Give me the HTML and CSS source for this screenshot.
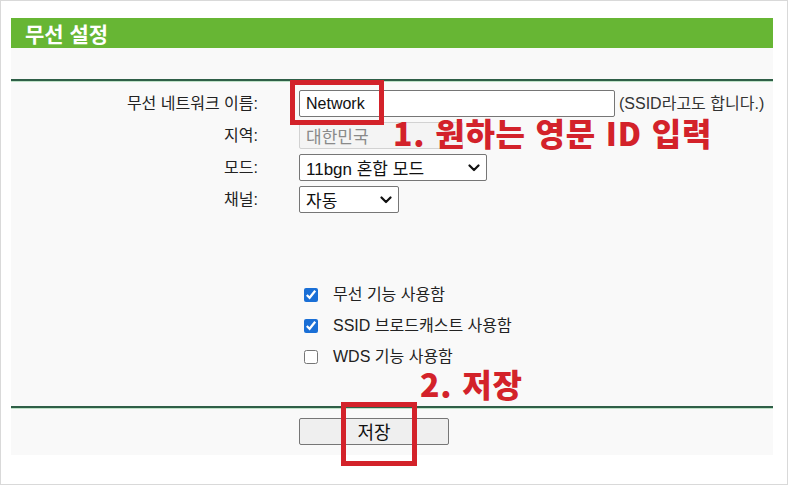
FILE: index.html
```html
<!DOCTYPE html>
<html lang="ko">
<head>
<meta charset="utf-8">
<title>무선 설정</title>
<link rel="stylesheet" href="styles.css">
</head>
<body>
<div class="page">
  <div class="panel">
    <div class="header">무선 설정</div>
    <div class="rule rule-top"></div>
    <div class="form">
      <div class="label">무선 네트워크 이름:</div>
      <div class="field">
        <input class="text-input ssid" type="text" value="Network">
        <span class="hint">(SSID라고도 합니다.)</span>
      </div>

      <div class="label">지역:</div>
      <div class="field">
        <input class="text-input region" type="text" value="대한민국" disabled>
      </div>

      <div class="label">모드:</div>
      <div class="field">
        <div class="select mode">
          <span>11bgn 혼합 모드</span>
          <svg class="chev" width="12" height="8" viewBox="0 0 12 8"><path d="M1.5 1.5 L6 6 L10.5 1.5" fill="none" stroke="#111" stroke-width="2.2" stroke-linecap="round" stroke-linejoin="round"/></svg>
        </div>
      </div>

      <div class="label">채널:</div>
      <div class="field">
        <div class="select channel">
          <span>자동</span>
          <svg class="chev" width="12" height="8" viewBox="0 0 12 8"><path d="M1.5 1.5 L6 6 L10.5 1.5" fill="none" stroke="#111" stroke-width="2.2" stroke-linecap="round" stroke-linejoin="round"/></svg>
        </div>
      </div>
    </div>

    <div class="checks">
      <label class="check-row"><input type="checkbox" checked><span>무선 기능 사용함</span></label>
      <label class="check-row"><input type="checkbox" checked><span>SSID 브로드캐스트 사용함</span></label>
      <label class="check-row"><input type="checkbox"><span>WDS 기능 사용함</span></label>
    </div>

    <div class="rule rule-bottom"></div>
    <div class="actions">
      <button class="save-btn" type="button">저장</button>
    </div>
  </div>

  <div class="mark box-name"></div>
  <div class="note note-1">1. 원하는 영문 ID 입력</div>
  <div class="note note-2">2. 저장</div>
  <div class="mark box-save"></div>
</div>
</body>
</html>
```

FILE: styles.css
```css
html, body {
  margin: 0;
  padding: 0;
  background: #ffffff;
}

body {
  font-family: "Liberation Sans", "Noto Sans CJK KR", sans-serif;
  color: #222;
}

.page {
  position: relative;
  width: 788px;
  height: 485px;
  box-sizing: border-box;
  border: 1px solid #d9d9d9;
  padding: 17px 0 0 10px;
  background: #ffffff;
}

.panel {
  width: 762px;
  height: 437px;
  background: #f9f9f9;
  display: flex;
  flex-direction: column;
}

.header {
  height: 30px;
  line-height: 30px;
  background: #67b634;
  color: #ffffff;
  font-size: 21px;
  font-weight: bold;
  padding-left: 14px;
  font-family: "Noto Sans CJK KR", sans-serif;
}

.rule {
  height: 2px;
  background: #2f5f47;
  border-bottom: 1px solid #bfe2c8;
}

.rule-top {
  margin-top: 31px;
}

.form {
  display: grid;
  grid-template-columns: 247px auto;
  grid-auto-rows: 27px;
  column-gap: 41px;
  row-gap: 5px;
  padding-top: 8px;
}

.label {
  text-align: right;
  font-size: 16px;
  line-height: 27px;
  color: #222;
}

.field {
  display: flex;
  align-items: center;
  gap: 4px;
}

.text-input {
  box-sizing: border-box;
  height: 27px;
  margin: 0;
  border: 1px solid #767676;
  border-radius: 2px;
  padding: 0 6px;
  font-family: "Liberation Sans", "Noto Sans CJK KR", sans-serif;
  font-size: 16px;
  color: #111;
  background: #ffffff;
  outline: none;
}

.ssid {
  width: 316px;
}

.region {
  width: 164px;
  background: #f4f4f4;
  border-color: #d2d2d2;
  color: #8a8a8a;
  font-size: 17px;
}

.hint {
  font-size: 16px;
  line-height: 18px;
  color: #333;
}

.select {
  box-sizing: border-box;
  height: 27px;
  border: 1px solid #767676;
  border-radius: 2px;
  background: #ffffff;
  display: flex;
  align-items: center;
  justify-content: space-between;
  padding: 0 6px 0 6px;
  font-size: 17px;
  color: #111;
}

.mode {
  width: 188px;
}

.channel {
  width: 100px;
}

.chev {
  display: block;
}

.checks {
  margin-top: 66px;
  padding-left: 293px;
  display: flex;
  flex-direction: column;
}

.check-row {
  height: 31px;
  display: flex;
  align-items: center;
  gap: 15px;
  font-size: 16px;
  line-height: 18px;
  color: #222;
}

.check-row input {
  margin: 0;
  width: 14px;
  height: 14px;
  accent-color: #1a6fd6;
}

.rule-bottom {
  margin-top: 34px;
}

.actions {
  padding-top: 9px;
  padding-left: 288px;
}

.save-btn {
  width: 150px;
  height: 27px;
  margin: 0;
  border: 1px solid #767676;
  border-radius: 2px;
  background: #efefef;
  font-family: "Noto Sans CJK KR", sans-serif;
  font-size: 18px;
  line-height: 25px;
  color: #111;
  padding: 0;
}

.mark {
  position: absolute;
  box-sizing: border-box;
  border: 5px solid #d3222a;
}

.box-name {
  left: 289px;
  top: 79px;
  width: 94px;
  height: 45px;
}

.box-save {
  left: 340px;
  top: 401px;
  width: 76px;
  height: 64px;
}

.note {
  position: absolute;
  color: #d3222a;
  font-family: "Noto Sans CJK KR", sans-serif;
  font-weight: 900;
  white-space: nowrap;
  line-height: 26px;
  font-size: 32px;
  letter-spacing: 0.8px;
}

.note-1 {
  left: 392px;
  top: 118px;
}

.note-2 {
  left: 419px;
  top: 369px;
}
```
